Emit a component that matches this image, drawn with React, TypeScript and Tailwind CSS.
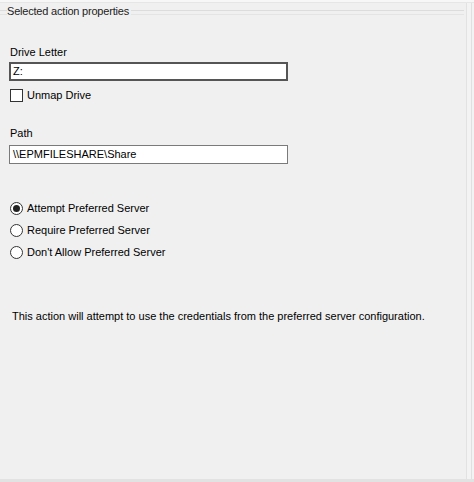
export default function App() {
  const font = { fontFamily: '"Liberation Sans", Arial, sans-serif' };
  return (
    <div className="w-[474px] h-[482px] bg-[#f0f0f0] relative overflow-hidden text-[#000] text-[11px]" style={font}>
      <div className="h-[3px] bg-[#f7f7f7] border-b border-[#e6e6e6]" />
      <div className="flex h-[476px]">
        <div className="flex-1 relative pt-[1px]">
          <div className="absolute left-0 right-[2px] top-[7px] border-t border-[#dcdcdc]" />
          <div className="absolute left-0 right-[2px] top-[11px] border-t border-[#e4e4e4]" />
          <div className="relative pl-[7px] leading-[14px]">
            <span className="bg-[#f0f0f0] pr-[2px] text-[#222] tracking-[-0.2px]">Selected action properties</span>
          </div>
          <div className="flex flex-col pl-[9px] pt-[27px]">
            <div className="pl-[1px] leading-[14px]">Drive Letter</div>
            <div className="mt-[3px] w-[279px] h-[19px] border-2 border-[#555] bg-white flex items-center pl-[2px] leading-none">Z:</div>
            <div className="mt-[6px] flex items-center pl-[1px]">
              <div className="w-[13px] h-[13px] border border-[#333] bg-white" />
              <span className="ml-[4px]">Unmap Drive</span>
            </div>
            <div className="mt-[22px] pl-[1px] leading-[14px]">Path</div>
            <div className="mt-[5px] w-[279px] h-[19px] border border-[#7a7a7a] bg-white flex items-center pl-[3px] leading-none">\\EPMFILESHARE\Share</div>
            <div className="mt-[38px] flex flex-col gap-[8px] pl-[1px]">
              {["Attempt Preferred Server", "Require Preferred Server", "Don't Allow Preferred Server"].map((t, i) => (
                <div key={t} className="flex items-center h-[14px]">
                  <div className="w-[13px] h-[13px] rounded-full border border-[#333] bg-white flex items-center justify-center">
                    {i === 0 && <div className="w-[7px] h-[7px] rounded-full bg-[#222]" />}
                  </div>
                  <span className="ml-[4px]">{t}</span>
                </div>
              ))}
            </div>
            <div className="mt-[48px] pl-[3px]">This action will attempt to use the credentials from the preferred server configuration.</div>
          </div>
        </div>
        <div className="w-[8px] border-l border-[#e2e2e2] bg-[#f3f3f3] relative">
          <div className="absolute right-[2px] top-0 bottom-0 border-r border-[#e0e0e0]" />
        </div>
      </div>
      <div className="h-[3px] bg-[#e2e2e2]" />
    </div>
  );
}
